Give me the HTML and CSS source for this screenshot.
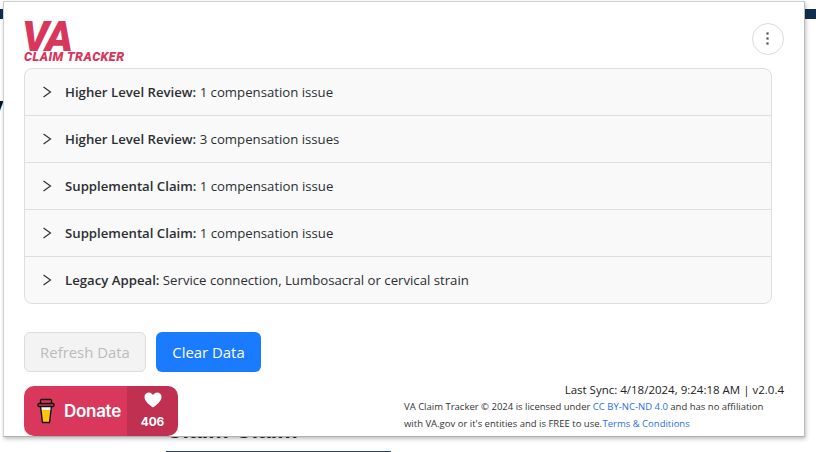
FILE: index.html
```html
<!DOCTYPE html>
<html lang="en">
<head>
<meta charset="utf-8">
<title>VA Claim Tracker</title>
<link rel="stylesheet" href="styles.css">
</head>
<body>
<div class="page">
  <div class="page-bar"></div>
  <div class="page-letter">V</div>
  <div class="page-heading">Claim Claim</div>
  <div class="page-rule"></div>
</div>
<main class="popup">
  <header class="top">
    <div class="logo">
      <div class="logo-va">VA</div>
      <div class="logo-sub">CLAIM TRACKER</div>
    </div>
    <button class="menu" aria-label="Menu">
      <svg width="4" height="14" viewBox="0 0 4 14"><rect x="0.4" y="0.4" width="2.2" height="2.2" fill="#555"/><rect x="0.4" y="5.4" width="2.2" height="2.2" fill="#555"/><rect x="0.4" y="10.4" width="2.2" height="2.2" fill="#555"/></svg>
    </button>
  </header>
  <section class="accordion">
    <div class="row"><svg class="chev" width="10" height="12" viewBox="0 0 10 12"><path d="M1.5 1 L8.5 6 L1.5 11" fill="none" stroke="#333" stroke-width="1.2"/></svg><span><b>Higher Level Review:</b> 1 compensation issue</span></div>
    <div class="row"><svg class="chev" width="10" height="12" viewBox="0 0 10 12"><path d="M1.5 1 L8.5 6 L1.5 11" fill="none" stroke="#333" stroke-width="1.2"/></svg><span><b>Higher Level Review:</b> 3 compensation issues</span></div>
    <div class="row"><svg class="chev" width="10" height="12" viewBox="0 0 10 12"><path d="M1.5 1 L8.5 6 L1.5 11" fill="none" stroke="#333" stroke-width="1.2"/></svg><span><b>Supplemental Claim:</b> 1 compensation issue</span></div>
    <div class="row"><svg class="chev" width="10" height="12" viewBox="0 0 10 12"><path d="M1.5 1 L8.5 6 L1.5 11" fill="none" stroke="#333" stroke-width="1.2"/></svg><span><b>Supplemental Claim:</b> 1 compensation issue</span></div>
    <div class="row"><svg class="chev" width="10" height="12" viewBox="0 0 10 12"><path d="M1.5 1 L8.5 6 L1.5 11" fill="none" stroke="#333" stroke-width="1.2"/></svg><span><b>Legacy Appeal:</b> Service connection, Lumbosacral or cervical strain</span></div>
  </section>
  <div class="actions">
    <button class="btn btn-off">Refresh Data</button>
    <button class="btn btn-on">Clear Data</button>
  </div>
  <footer class="foot">
    <div class="donate">
      <div class="donate-main">
        <svg width="18" height="26" viewBox="0 0 18 26"><path d="M3.5 8 L5.5 24 H12.5 L14.5 8 Z" fill="#fff"/><path d="M4.4 12 L5.7 24 H12.3 L13.6 12 Z" fill="#ffc20e"/><path d="M3.5 8 L5.5 24.5 H12.5 L14.5 8" fill="none" stroke="#111" stroke-width="1.4"/><rect x="1" y="5.5" width="16" height="3" rx="1" fill="#d9375b" stroke="#111" stroke-width="1.3"/><rect x="3.5" y="1.5" width="11" height="4" rx="1" fill="#d9375b" stroke="#111" stroke-width="1.3"/></svg>
        <span class="donate-text">Donate</span>
      </div>
      <div class="donate-count">
        <svg width="18" height="16" viewBox="0 0 18 16"><path d="M9 15.5 C3 11 0.5 8.2 0.5 4.9 C0.5 2.3 2.5 0.5 4.8 0.5 C6.5 0.5 8 1.4 9 3 C10 1.4 11.5 0.5 13.2 0.5 C15.5 0.5 17.5 2.3 17.5 4.9 C17.5 8.2 15 11 9 15.5 Z" fill="#fff"/></svg>
        <span>406</span>
      </div>
    </div>
    <div class="info">
      <div class="sync">Last Sync: 4/18/2024, 9:24:18 AM | v2.0.4</div>
      <p class="legal">VA Claim Tracker © 2024 is licensed under <a href="#">CC BY-NC-ND 4.0</a> and has no affiliation<br>with VA.gov or it's entities and is FREE to use. <a href="#" class="tight">Terms &amp; Conditions</a></p>
    </div>
  </footer>
</main>
</body>
</html>
```
FILE: styles.css
```css
* { box-sizing: border-box; }
html, body { margin: 0; height: 452px; overflow: hidden; background: #fff; }
body { font-family: "Open Sans", "Noto Sans", sans-serif; color: #212529; }
.page { position: absolute; inset: 0; overflow: hidden; }
.page-bar { height: 10px; margin-top: 9px; background: #112e51; }
.page-letter { position: absolute; left: -19px; top: 93px; font: 700 34px "Liberation Sans", sans-serif; color: #111; }
.page-heading { position: absolute; left: 166px; top: 417px; font: 700 23px "Liberation Sans", sans-serif; color: #222; }
.page-rule { position: absolute; left: 166px; top: 451px; width: 225px; height: 1px; background: #1a4480; }
.popup { position: absolute; left: 3px; top: 1px; width: 802px; height: 436px; background: #fff; border: 1px solid #cfcfcf; border-right-color: #bdbdbd; border-bottom-color: #b0b0b0; box-shadow: 1px 2px 4px rgba(0,0,0,.25); padding: 0 20px 0 20px; }
.top { display: flex; justify-content: space-between; height: 66px; padding-top: 20px; }
.logo { width: 102px; color: #d9365b; }
.logo-va { font: italic 900 42px/30px "Roboto", sans-serif; letter-spacing: -2.2px; height: 29px; margin-left: -2px; }
.logo-sub { font: italic 900 12.6px/12px "Roboto", sans-serif; letter-spacing: .45px; white-space: nowrap; }
.menu { width: 32px; height: 32px; margin: 1px 0 0 0; padding: 0; border: 1px solid #dcdcdc; border-radius: 50%; background: #fff; display: flex; align-items: center; justify-content: center; }
.accordion { width: 748px; border: 1px solid #dedede; border-radius: 8px; background: #f9f9f9; overflow: hidden; }
.row { height: 47px; display: flex; align-items: center; padding-left: 17px; font-size: 13.2px; color: #2b2f33; border-top: 1px solid #dedede; }
.row:first-child { height: 46px; border-top: 0; }
.row b { font-weight: 600; }
.chev { margin-right: 13px; flex: none; }
.actions { display: flex; gap: 10px; margin-top: 28px; }
.btn { height: 40px; padding: 0; border-radius: 6px; font: 14.9px "Open Sans", sans-serif; border: 1px solid transparent; }
.btn-off { width: 122px; background: #f3f3f3; border-color: #dcdcdc; color: #bbb; }
.btn-on { width: 105px; background: #1a7bff; color: #fff; }
.foot { display: flex; justify-content: space-between; margin-top: 14px; }
.donate { width: 154px; height: 50px; border-radius: 10px; overflow: hidden; display: flex; color: #fff; }
.donate-main { width: 103px; background: #d9375b; display: flex; align-items: center; padding-left: 13px; gap: 9px; }
.donate-text { font: 600 17px "Inter", sans-serif; letter-spacing: -.3px; }
.donate-count { flex: 1; background: #c03050; display: flex; flex-direction: column; align-items: center; padding-top: 6px; font: 700 11.8px/14px "Inter", sans-serif; gap: 7px; }
.info { width: 380px; }
.sync { font-size: 11.5px; font-weight: 500; line-height: 16px; text-align: right; color: #222; margin-top: -4px; }
.legal { margin: 0; font-size: 9.5px; line-height: 17px; color: #333; white-space: nowrap; }
.legal a { color: #2a6ee8; text-decoration: none; }
.legal a.tight { margin-left: -2px; }
```
